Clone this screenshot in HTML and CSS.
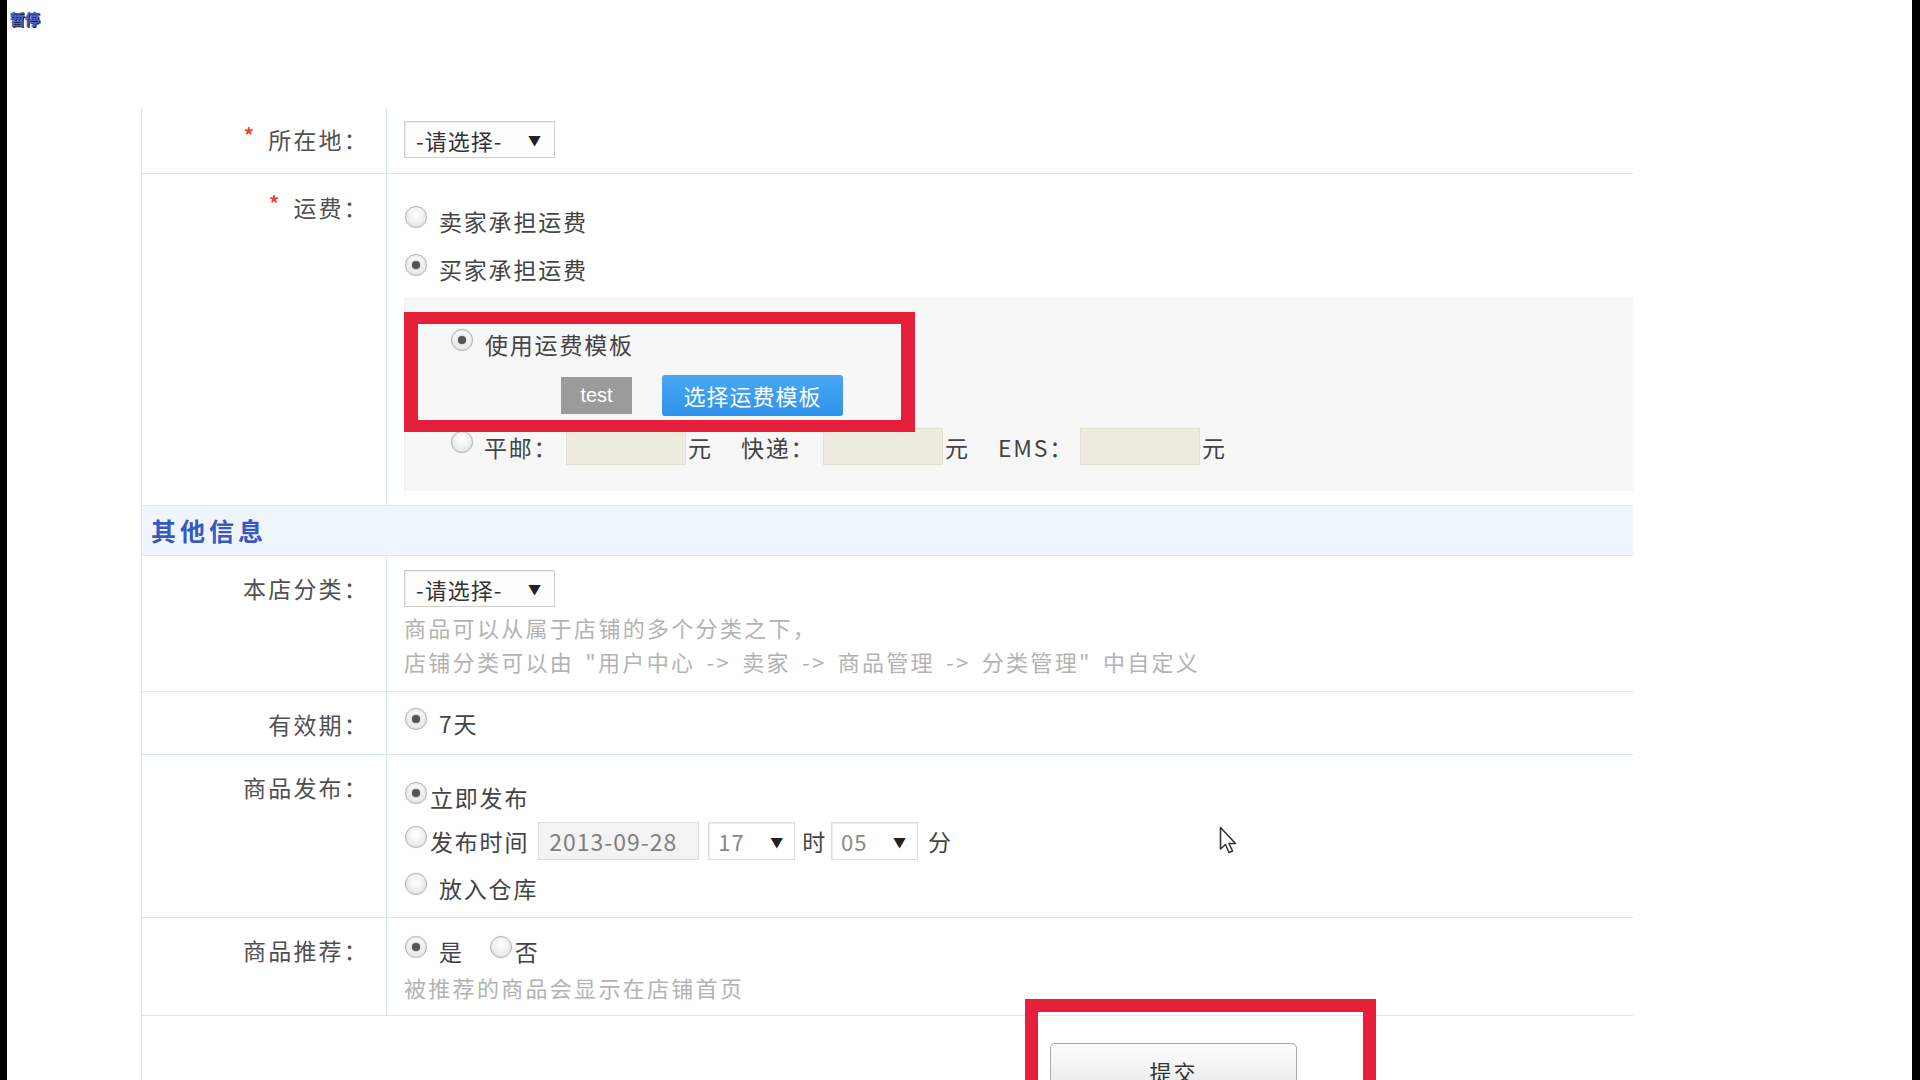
FILE: index.html
```html
<!DOCTYPE html>
<html>
<head>
  <meta charset="utf-8">
  <title>发布商品</title>
  <link rel="stylesheet" href="styles.css">
</head>
<body>
  <div class="topbar"><span class="pause">暂停</span></div>

  <div class="form">
    <div class="row row-loc">
      <div class="label"><span class="req">*</span>所在地：</div>
      <div class="field">
        <div class="select"><span>-请选择-</span><b>▼</b></div>
      </div>
    </div>

    <div class="row row-fee">
      <div class="label label-fee"><span class="req">*</span>运费：</div>
      <div class="field">
        <div class="opt"><span class="radio"></span><span class="txt">卖家承担运费</span></div>
        <div class="opt"><span class="radio on"></span><span class="txt">买家承担运费</span></div>
        <div class="fee-box">
          <div class="opt tpl"><span class="radio on"></span><span class="txt">使用运费模板</span></div>
          <div class="tpl-btns">
            <span class="btn-grey">test</span>
            <span class="btn-blue">选择运费模板</span>
          </div>
          <div class="fee-line">
            <span class="radio"></span>
            <span class="fee-label">平邮：</span><span class="fee-input"></span><span class="fee-unit">元</span>
            <span class="fee-label">快递：</span><span class="fee-input"></span><span class="fee-unit">元</span>
            <span class="fee-label">EMS：</span><span class="fee-input"></span><span class="fee-unit">元</span>
          </div>
          <div class="mark mark-tpl"></div>
        </div>
      </div>
    </div>

    <div class="section-head">其他信息</div>

    <div class="row row-cat">
      <div class="label">本店分类：</div>
      <div class="field">
        <div class="select"><span>-请选择-</span><b>▼</b></div>
        <div class="tip">商品可以从属于店铺的多个分类之下，</div>
        <div class="tip">店铺分类可以由 "用户中心 -&gt; 卖家 -&gt; 商品管理 -&gt; 分类管理" 中自定义</div>
      </div>
    </div>

    <div class="row row-valid">
      <div class="label">有效期：</div>
      <div class="field">
        <div class="opt"><span class="radio on"></span><span class="txt">7天</span></div>
      </div>
    </div>

    <div class="row row-pub">
      <div class="label">商品发布：</div>
      <div class="field">
        <div class="opt pub-now"><span class="radio on"></span><span class="txt tight">立即发布</span></div>
        <div class="opt pub-time">
          <span class="radio"></span><span class="txt tight">发布时间</span>
          <span class="date">2013-09-28</span>
          <span class="select small"><span>17</span><b>▼</b></span>
          <span class="txt unit">时</span>
          <span class="select small"><span>05</span><b>▼</b></span>
          <span class="txt unit">分</span>
        </div>
        <div class="opt pub-store"><span class="radio"></span><span class="txt">放入仓库</span></div>
      </div>
    </div>

    <div class="row row-rec">
      <div class="label">商品推荐：</div>
      <div class="field">
        <div class="opt rec">
          <span class="radio on"></span><span class="txt">是</span>
          <span class="radio no"></span><span class="txt tight">否</span>
        </div>
        <div class="tip">被推荐的商品会显示在店铺首页</div>
      </div>
    </div>

    <div class="submit-row">
      <button class="submit">提交</button>
      <div class="mark mark-submit"></div>
    </div>
  </div>

  <svg class="cursor" width="20" height="30" viewBox="0 0 20 30">
    <path d="M1.5 1.5 L1.5 23 L6.5 18.5 L10 26.5 L13.5 25 L10 17.5 L16.5 17.5 Z" fill="#fff" stroke="#333" stroke-width="1.6" stroke-linejoin="round"/>
  </svg>
</body>
</html>
```

FILE: styles.css
```css
html, body {
    margin: 0;
    padding: 0;
}

body {
    position: relative;
    background: #fff;
    border-left: 7px solid #000;
    border-right: 8px solid #000;
    min-height: 1080px;
    box-sizing: border-box;
    overflow: hidden;
    font-family: "Noto Sans CJK SC", "Liberation Sans", sans-serif;
    color: #444;
}

.topbar {
    height: 107px;
    padding: 6px 0 0 3px;
    box-sizing: border-box;
}

.pause {
    font-size: 15px;
    font-weight: bold;
    color: #4a62d0;
    text-shadow: 0 0 1px #112, 1px 1px 0 #223;
}

.form {
    margin-left: 134px;
    width: 1492px;
    border-left: 1px solid #dbe7f1;
    box-sizing: border-box;
}

.row {
    display: grid;
    grid-template-columns: 245px 1fr;
    border-bottom: 1px solid #dbe7f1;
}

.row-fee {
    border-bottom: 0;
}

.label {
    border-right: 1px solid #dbe7f1;
    text-align: right;
    padding: 17px 17px 0 0;
    line-height: 30px;
    font-size: 23px;
    letter-spacing: 2.2px;
    color: #505050;
}

.label-fee {
    padding-top: 18px;
}

.req {
    color: #e8442c;
    font-size: 20px;
    font-weight: bold;
    vertical-align: top;
    line-height: 22px;
    margin-right: 12px;
}

.field {
    padding: 14px 0 0 17px;
    font-size: 23px;
    letter-spacing: 1.8px;
}

.row-loc .field {
    padding-bottom: 15px;
}

.row-fee .field {
    padding-top: 23px;
    padding-bottom: 14px;
}

.row-cat .field {
    padding-bottom: 13px;
}

.row-valid .field {
    padding-bottom: 14px;
}

.row-pub .field {
    padding-top: 20px;
    padding-bottom: 9px;
}

.row-rec .field {
    padding-bottom: 11px;
}

/* selects */
.select {
    display: flex;
    align-items: center;
    justify-content: space-between;
    width: 151px;
    height: 37px;
    box-sizing: border-box;
    padding: 0 12px 0 11px;
    border: 1px solid #cfcfcf;
    background: #fdfdfd;
    box-shadow: inset 1px 1px 0 #eee;
    font-size: 22px;
    letter-spacing: 1px;
    color: #333;
}

.select b {
    font-size: 13px;
    color: #222;
}

.select.small {
    display: inline-flex;
    width: 87px;
    height: 38px;
    padding: 0 10px 0 9px;
    color: #888;
    background: #fff;
    border-color: #ddd;
}

/* radios */
.opt {
    display: flex;
    align-items: center;
    height: 48px;
}

.radio {
    display: inline-block;
    width: 20px;
    height: 20px;
    border-radius: 50%;
    border: 1px solid #b4b4b4;
    background: radial-gradient(circle at 50% 40%, #fff 0, #f2f2f2 45%, #d9d9d9 100%);
    box-shadow: 0 0 1px #ccc;
    margin: 0 12px 9px 1px;
    flex: none;
    position: relative;
}

.radio.on::after {
    content: "";
    position: absolute;
    left: 6px;
    top: 6px;
    width: 8px;
    height: 8px;
    border-radius: 50%;
    background: #555;
    box-shadow: 0 0 2px #888;
}

.txt {
    color: #444;
}

.txt.tight {
    margin-left: -9px;
}

/* freight box */
.fee-box {
    position: relative;
    margin-top: 5px;
    height: 193px;
    box-sizing: border-box;
    padding: 25px 0 0 45px;
    background: #f7f7f7;
    border-top: 1px solid #efefef;
    border-left: 1px solid #efefef;
}

.fee-box .opt.tpl {
    height: 40px;
}

.tpl-btns {
    display: flex;
    align-items: center;
    gap: 30px;
    height: 41px;
    margin: 11px 0 0 111px;
}

.btn-grey {
    width: 71px;
    height: 37px;
    line-height: 37px;
    text-align: center;
    background: #9b9b9b;
    color: #fff;
    font-family: "Liberation Sans", sans-serif;
    font-size: 20px;
    letter-spacing: 0;
}

.btn-blue {
    width: 181px;
    height: 41px;
    line-height: 41px;
    text-align: center;
    background: linear-gradient(#4aa9f6, #2f92ea);
    border-radius: 3px;
    color: #fff;
    font-size: 22px;
    letter-spacing: 1px;
}

.fee-line {
    display: flex;
    align-items: center;
    height: 37px;
    margin-top: 12px;
}

.fee-line .radio {
    margin-right: 11px;
}

.fee-label {
    width: 82px;
    flex: none;
}

.fee-input {
    width: 120px;
    height: 37px;
    flex: none;
    box-sizing: border-box;
    background: #edecdf;
    border: 1px solid #e2e1d6;
}

.fee-unit {
    width: 55px;
    flex: none;
    padding-left: 2px;
    box-sizing: border-box;
}

.mark {
    position: absolute;
    box-sizing: border-box;
    border: 12px solid #e6203b;
    border-left-width: 14px;
    border-right-width: 14px;
}

.mark-tpl {
    left: -1px;
    top: 13px;
    width: 511px;
    height: 120px;
}

/* section header */
.section-head {
    height: 51px;
    box-sizing: border-box;
    border-top: 1px solid #dbe7f1;
    border-bottom: 1px solid #dbe7f1;
    background: #eef5fc;
    padding-left: 9px;
    line-height: 49px;
    font-size: 25px;
    font-weight: bold;
    letter-spacing: 4px;
    color: #3857c0;
}

.tip {
    line-height: 34px;
    color: #b3b3b3;
    font-size: 22px;
    letter-spacing: 2.3px;
    word-spacing: 4px;
}

.row-cat .select {
    margin-bottom: 3px;
}

.row-valid .opt {
    height: 34px;
}

/* publish */
.pub-now {
    height: 44px;
}

.pub-time {
    height: 38px;
    margin-top: 3px;
}

.pub-store {
    height: 40px;
    margin-top: 8px;
}

.date {
    width: 161px;
    height: 38px;
    box-sizing: border-box;
    margin: 0 9px 0 9px;
    padding-left: 10px;
    line-height: 36px;
    background: #f3f3f3;
    border: 1px solid #ddd;
    color: #808080;
    font-size: 23px;
    letter-spacing: 1px;
}

.txt.unit {
    margin: 0 4px 0 7px;
}

.txt.unit:last-child {
    margin-left: 10px;
}

.rec {
    height: 38px;
}

.radio.no {
    margin-left: 26px;
}

/* submit */
.submit-row {
    position: relative;
    height: 80px;
    padding: 27px 0 0 908px;
}

.submit {
    width: 247px;
    height: 56px;
    border: 1px solid #a9a9a9;
    border-radius: 5px;
    background: linear-gradient(#fdfdfd, #e6e6e6);
    font-family: "Noto Sans CJK SC", sans-serif;
    font-size: 22px;
    color: #333;
    letter-spacing: 2px;
}

.mark-submit {
    left: 883px;
    top: -17px;
    width: 351px;
    height: 120px;
    border-width: 13px;
}

.cursor {
    position: absolute;
    left: 1212px;
    top: 826px;
}
```
